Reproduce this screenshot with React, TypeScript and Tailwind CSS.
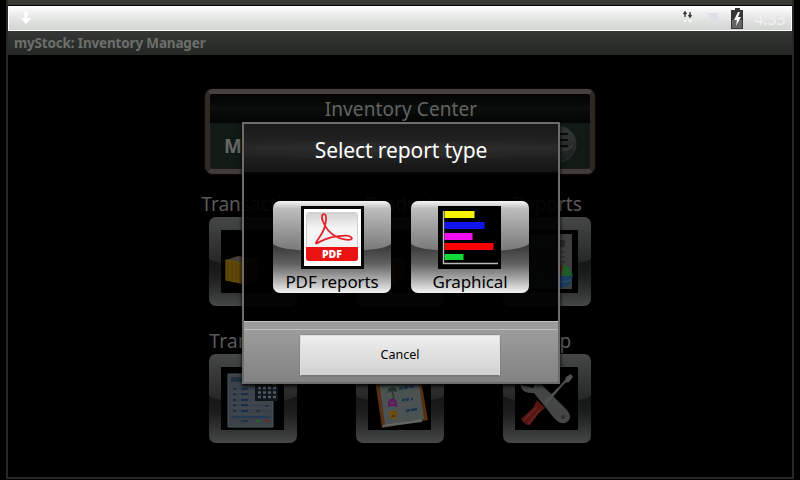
import type { ReactNode } from "react"

function PdfIcon() {
  return (
    <svg className="block h-[63px] w-[63px] shrink-0" viewBox="0 0 63 63">
      <rect width="63" height="63" fill="#050505" />
      <rect x="3" y="3" width="57" height="57" fill="#fff" />
      <defs>
        <linearGradient id="page" x1="0" y1="0" x2="0" y2="1">
          <stop offset="0" stopColor="#d2d2d2" />
          <stop offset="0.35" stopColor="#f6f6f6" />
          <stop offset="1" stopColor="#ededed" />
        </linearGradient>
      </defs>
      <rect x="5.5" y="6.5" width="51" height="48" rx="2.5" fill="url(#page)" stroke="#d0d0d0" />
      <path d="M5 41h52v11a3 3 0 0 1-3 3H8a3 3 0 0 1-3-3z" fill="#ec1313" />
      <path
        d="M24 8.500c-3.500-1.500-3.800 3-2 7C24 20.500 28 27 35 30.500c5 2.700 12 4 15 2.900 2.500-1.200-.5-3.700-5-3.700-9 0-20 2.800-26.500 6.200-3.500 2-4 2-3.200.2C17 32.500 22 28 24 20c1-4.500 2-10 0-11.500z"
        fill="none"
        stroke="#e3222a"
        strokeWidth="1.800"
        strokeLinejoin="round"
      />
      <text x="31" y="51.500" textAnchor="middle" fontSize="10.500" fontWeight="800" fill="#fff" className="font-['Open_Sans',sans-serif]">
        PDF
      </text>
    </svg>
  )
}

function ChartIcon() {
  const bars = [
    { y: 5, w: 30, color: "#f6f200" },
    { y: 16, w: 40, color: "#1414ee" },
    { y: 27, w: 28, color: "#f40df0" },
    { y: 37, w: 49, color: "#fb0000" },
    { y: 48, w: 19, color: "#12d83c" },
  ]

  return (
    <svg className="mr-[2px] block h-[63px] w-[63px] shrink-0" viewBox="0 0 63 63">
      <rect width="63" height="63" fill="#000" />
      {bars.map((bar) => (
        <rect key={bar.y} x="6.500" y={bar.y} width={bar.w} height={bar.y === 48 ? 6 : 7} fill={bar.color} />
      ))}
      <path d="M5.500 5v53M5 57.500h55" stroke="#b9b9b9" strokeWidth="1.400" fill="none" />
    </svg>
  )
}

function BoxIcon() {
  return (
    <svg className="block h-full w-full" viewBox="0 0 63 63">
      <path d="M5 30l20 4v20L5 50z" fill="#574009" />
      <path d="M5 30l12-4 20 3-12 5z" fill="#474133" />
      <path d="M25 34l12-5v20l-12 5z" fill="#33260a" />
      <path d="M5 30l20 4v20L5 50zM9 31v19M13 32v19M17 33v19M21 34v18" stroke="#6b500c" strokeWidth="1.200" fill="none" />
    </svg>
  )
}

function PieReportIcon() {
  return (
    <svg className="block h-full w-full" viewBox="0 0 63 63">
      <path d="M8 4h49v55H8z" fill="#3c3f3e" />
      <path d="M40 10h10v7H40z" fill="#282b2a" />
      <path d="M14 22h36M14 27h36M14 32h36M14 37h36" stroke="#2e3130" strokeWidth="1.500" />
      <circle cx="46" cy="46" r="11.500" fill="#1b3c61" />
      <path d="M46 46l-9-7a12 12 0 0 1 11-4z" fill="#5e1c15" />
      <path d="M46 46l2-11.500a12 12 0 0 1 9.500 11.500z" fill="#205b28" />
      <path d="M36 50q10 4 20 0" stroke="#2b4c6a" strokeWidth="1.500" fill="none" />
    </svg>
  )
}

function LedgerIcon() {
  const rows = [16, 21, 27, 32, 38]

  return (
    <svg className="block h-full w-full" viewBox="0 0 63 63">
      <path d="M7 7h45v53H7z" fill="#3b4249" stroke="#4b545b" />
      <path d="M10 10h23v5H10z" fill="#22303f" />
      {rows.map((y) => (
        <g key={y}>
          <path d={`M12 ${y + 6}h3M20 ${y + 6}h7`} stroke="#1c2c44" strokeWidth="1.800" />
          <path d={`M9 ${y + 9}h41`} stroke="#4d555b" strokeWidth=".6" />
        </g>
      ))}
      <path d="M10 50h39" stroke="#223a53" strokeWidth="2" />
      <path d="M20 54h7M44 39h4M35 44h4" stroke="#1c2c44" strokeWidth="1.500" />
      <path d="M35 54h4" stroke="#2c611f" strokeWidth="1.800" />
      <path d="M44 54h4" stroke="#6e281c" strokeWidth="1.800" />
      <path d="M34 12h23v22H34z" fill="#101517" />
      <path d="M37 21h18M37 25.500h18M37 30h18" stroke="#4c5b67" strokeWidth="2.600" strokeDasharray="3 2" />
      <path d="M51 17h4" stroke="#6b4f24" strokeWidth="2" />
    </svg>
  )
}

function NotebookIcon() {
  return (
    <svg className="block h-full w-full" viewBox="0 0 63 63">
      <path d="M6 7l45-5 9 51-46 8z" fill="#553013" />
      <path d="M10 6l39-3 7 49-39 6z" fill="#4b5352" />
      <path d="M14 58l40-6v3l-39 5z" fill="#5f6463" />
      <path d="M19 26q1-6 6-6 4 0 4 5l-4-1-2 1-1-1z" fill="#23362b" />
      <path d="M24 24l2 7q-1 2-2 0" fill="none" stroke="#23362b" strokeWidth="1.200" />
      <path d="M20 40v-5l2-3h5l2 3v5h-2v-1h-5v1z" fill="#5d1a5c" />
      <path d="M22 36h5" stroke="#4b5352" strokeWidth="1.200" />
      <path d="M21 44h9v3h-1v5h-7v-5h-1z" fill="#6b4c10" />
      <circle cx="25.500" cy="49" r="1.300" fill="#403010" />
      <path d="M31 22l4-1M36 21l4-1M41 20l5-1M34 33h3M38 33l3-1M43 32h2M38 44l4-1M43 43l6-1" stroke="#19334f" strokeWidth="2.600" />
    </svg>
  )
}

function ToolsIcon() {
  return (
    <svg className="block h-full w-full" viewBox="0 0 63 63">
      <path d="M5 17q1 10 14 9l20 25q7 8 13 4t0-12L28 19l-6-7-4 9z" fill="#424746" />
      <circle cx="48" cy="50" r="2" fill="#2c302f" />
      <path d="M29 35l21-22 1-3 5-3 2 3-4 5-4 1-19 22z" fill="#4c5150" />
      <path d="M22 33l8 8-6 5-9 12q-5 1-9-6l12-11z" fill="#551613" />
      <path d="M9 53l13-13M13 57l12-14" stroke="#702521" strokeWidth="1.200" />
    </svg>
  )
}

function MenuTile({ label, labelClass, children }: { label?: string; labelClass?: string; children: ReactNode }) {
  return (
    <div className="flex w-[147px] flex-col items-center">
      <div className={`h-[25px] text-[19px] leading-[25px] whitespace-nowrap text-[#5a5a5a] ${labelClass ?? ""}`}>{label}</div>
      <div className="relative h-[89px] w-[88px] overflow-hidden rounded-[7px] bg-linear-to-b from-[#151716] from-45% via-[#1b1d1c] via-65% to-[#454846] p-[12px] pt-[13px]">
        <div className="absolute inset-x-0 top-0 h-[48px] rounded-b-[50%_7px] bg-linear-to-b from-[#454846] to-[#242625]" />
        <div className="relative h-[63px] w-[63px] bg-black">{children}</div>
      </div>
    </div>
  )
}

function ReportButton({ label, children }: { label: string; children: ReactNode }) {
  return (
    <button className="relative h-[92px] w-[118px] overflow-hidden rounded-[7px] bg-linear-to-b from-[#333] from-45% via-[#606060] via-68% to-[#f4f4f4]">
      <span className="absolute inset-x-0 top-0 h-[51px] rounded-b-[50%_9px] bg-linear-to-b from-[#f6f6f6] via-[#bdbdbd] via-15% to-[#777]" />
      <span className="relative flex h-full flex-col items-center pt-[5px]">
        {children}
        <span className="text-[17px] leading-[25px] tracking-[-.1px] whitespace-nowrap text-black">{label}</span>
      </span>
    </button>
  )
}

function StatusBar() {
  return (
    <div className="flex h-[25px] items-center border border-white bg-linear-to-b from-[#fcfcfc] via-[#e4e6e4] to-[#d2d4d2] pr-[5px] pl-[9px]">
      <svg className="mb-[2px] h-[18px] w-[16px]" viewBox="0 0 16 18">
        <path d="M6.500 3h3v6h4L8 15 2.500 9h4z" fill="#fff" />
      </svg>
      <svg className="ml-auto h-[22px] w-[65px]" viewBox="0 0 65 22">
        <path d="M5 9V5M3.500 6L5 4l1.500 2M10 4v4M8.500 7l1.500 2 1.500-2" fill="none" stroke="#3a3a3a" strokeWidth="1.400" />
        <path d="M3 12l2 2 2-2M8 12l2 2 2-2" fill="none" stroke="#fff" />
        <path d="M27 5h11v13z" fill="#dcdfea" />
        <path d="M55 0h5v2h3v19H51V2h4z" fill="#373737" />
        <path d="M52 12h10v8H52z" fill="#656565" />
        <path d="M58 4l-4 8h3l-1 6 5-9h-3l2-5z" fill="#fff" />
      </svg>
      <div className="ml-[9px] w-[32px] text-[16px] leading-none text-[#f1f1f1]">4:33</div>
    </div>
  )
}

function HomeScreen() {
  return (
    <div className="flex flex-col items-center pt-[34px]">
      <div className="h-[85px] w-[390px] overflow-hidden rounded-[8px] border-[5px] border-t-[#45413d] border-r-[#2c2825] border-b-[#403d38] border-l-[#2f2a26] bg-[#121a15] shadow-[inset_0_0_0_1px_#1b1917,0_0_2px_#282522]">
        <div className="h-[29px] bg-linear-to-b from-[#020402] via-[#0b0e0c] to-[#030504] pl-[2px] text-center text-[19px] leading-[31px] tracking-[.1px] text-[#626462]">
          Inventory Center
        </div>
        <div className="flex h-[46px] items-center justify-between pr-[13px] pl-[14px]">
          <div className="text-[19px] font-bold text-[#666866]">Main</div>
          <svg className="mb-[5px] h-[38px] w-[38px]" viewBox="0 0 38 38">
            <defs>
              <linearGradient id="coin" x1="0" y1="0" x2="0" y2="1">
                <stop offset="0.2" stopColor="#313433" />
                <stop offset="1" stopColor="#181f1b" />
              </linearGradient>
            </defs>
            <circle cx="19" cy="19" r="18" fill="url(#coin)" stroke="#2c302e" />
            <path d="M20 9h9M20 15h9M20 21h9" stroke="#0a0c0b" strokeWidth="2.200" />
            <path d="M23 25q8 0 10-5" stroke="#3a3e3c" strokeWidth="1.500" fill="none" />
          </svg>
        </div>
      </div>
      <div className="mt-[18px] grid grid-cols-3 gap-y-[23px]">
        <MenuTile label="Transaction"><BoxIcon /></MenuTile>
        <MenuTile label="Product"><BoxIcon /></MenuTile>
        <MenuTile label="Reports"><PieReportIcon /></MenuTile>
        <MenuTile label="Tran Lists" labelClass="tracking-[.300px]"><LedgerIcon /></MenuTile>
        <MenuTile><NotebookIcon /></MenuTile>
        <MenuTile label="Help" labelClass="pl-[6px] tracking-[.500px]"><ToolsIcon /></MenuTile>
      </div>
    </div>
  )
}

function ReportDialog() {
  return (
    <div className="absolute top-[122px] left-[242px] flex h-[262px] w-[318px] flex-col border-2 border-[#6c6c6c] bg-black/92 shadow-[0_2px_4px_#000]">
      <div className="relative h-[48px] bg-linear-to-b from-[#191919] via-[#252525] to-[#151515]">
        <div className="absolute inset-x-0 top-[17px] h-[18px] bg-radial from-[#3a3a3a]/50 to-transparent" />
        <h1 className="relative text-center text-[21px] leading-[53px] tracking-[-.1px] text-white">Select report type</h1>
      </div>
      <div className="flex h-[149px] justify-center gap-[20px] pt-[29px]">
        <ReportButton label="PDF reports"><PdfIcon /></ReportButton>
        <ReportButton label="Graphical"><ChartIcon /></ReportButton>
      </div>
      <div className="flex-1 border-t border-[#c0c0c0] bg-[#9b9b9b] pt-[7px]">
        <div className="flex h-full justify-center border-t border-[#bebebe] bg-linear-to-b from-[#9c9c9c] to-[#828282] pt-[5px] pr-[2px]">
          <button className="h-[41px] w-[200px] border border-[#ddd] border-b-[#777] bg-linear-to-b from-[#eee] to-[#d1d1d1] text-[12.500px] text-black shadow-[0_0_1px_#555]">
            Cancel
          </button>
        </div>
      </div>
    </div>
  )
}

export default function App() {
  return (
    <div className="relative h-[480px] w-[800px] overflow-hidden bg-black pr-[6px] pl-[6px] font-['Noto_Sans','Open_Sans',sans-serif]">
      <div className="h-[479px] border-r-2 border-b-2 border-l-2 border-[#2b2927]">
        <div className="mb-px h-[5px] bg-[#3c3a35]" />
        <StatusBar />
        <div className="h-[24px] border-b border-[#272a28] bg-linear-to-b from-[#353735] to-[#262826] pl-[6px] text-[13.500px] leading-[24px] font-bold tracking-[-.16px] text-[#6c6f6c]">
          myStock: Inventory Manager
        </div>
        <HomeScreen />
      </div>
      <ReportDialog />
    </div>
  )
}
